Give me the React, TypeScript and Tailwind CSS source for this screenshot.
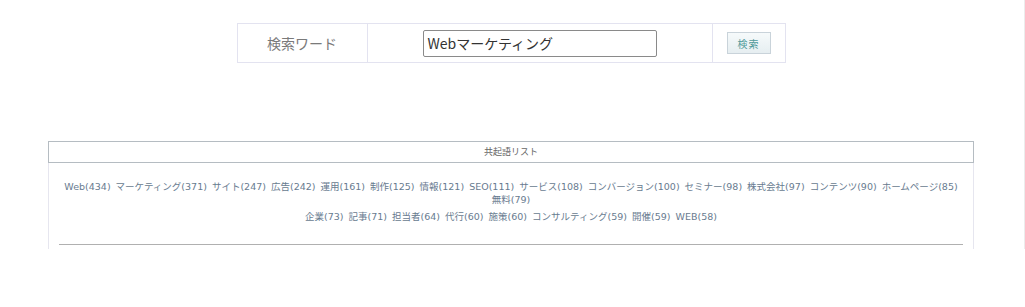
export default function App() {
  const words1 = [
    'Web(434)', 'マーケティング(371)', 'サイト(247)', '広告(242)', '運用(161)', '制作(125)', '情報(121)',
    'SEO(111)', 'サービス(108)', 'コンバージョン(100)', 'セミナー(98)', '株式会社(97)', 'コンテンツ(90)', 'ホームページ(85)',
  ];
  const words2 = [
    '企業(73)', '記事(71)', '担当者(64)', '代行(60)', '施策(60)', 'コンサルティング(59)', '開催(59)', 'WEB(58)',
  ];

  return (
    <div
      className="w-[1025px] h-[249px] border-r border-[#ececec] bg-white"
      style={{ fontFamily: '"Noto Sans CJK JP", "Noto Sans", sans-serif' }}
    >
      <div className="pt-[23px] flex justify-center pr-[2px]">
        <table className="border-collapse border border-[#e3e3f0]">
          <tbody>
            <tr className="h-[39px]">
              <td className="w-[130px] text-center text-[14px] text-[#7a7a7a] border-r border-[#e3e3f0]">
                検索ワード
              </td>
              <td className="w-[345px] border-r border-[#e3e3f0]">
                <div className="flex justify-center">
                  <div className="w-[234px] h-[27px] border border-[#8a8a8a] rounded-[2px] flex items-center px-[4px] text-[14px] text-[#333] leading-none">
                    Webマーケティング
                  </div>
                </div>
              </td>
              <td className="w-[73px]">
                <div className="flex justify-center">
                  <div className="w-[44px] h-[22px] border border-[#c9d3da] bg-gradient-to-b from-[#f6fafb] to-[#e6eef1] flex items-center justify-center text-[10px] text-[#4f9a9a] tracking-[1px]">
                    検索
                  </div>
                </div>
              </td>
            </tr>
          </tbody>
        </table>
      </div>

      <div className="mt-[78px] ml-[48px] w-[926px] h-[109px] border-x border-[#e6e6ef]">
        <div className="h-[22px] border border-[#b5bcc2] -mx-px flex items-center justify-center text-[9px] text-[#666]">
          共起語リスト
        </div>
        <div
          className="pt-[17px] text-center text-[9.5px] leading-[13px] text-[#687b8f]"
          style={{ fontFamily: '"DejaVu Sans", "Noto Sans CJK JP", sans-serif' }}
        >
          <div className="flex justify-center gap-x-[5px]">
            {words1.map((w) => (
              <span key={w}>{w}</span>
            ))}
          </div>
          <div>無料(79)</div>
          <div className="mt-[4px] flex justify-center gap-x-[5px]">
            {words2.map((w) => (
              <span key={w}>{w}</span>
            ))}
          </div>
        </div>
        <div className="mx-[10px] mt-[21px] border-t border-[#b0b0b0]" />
      </div>
    </div>
  );
}
